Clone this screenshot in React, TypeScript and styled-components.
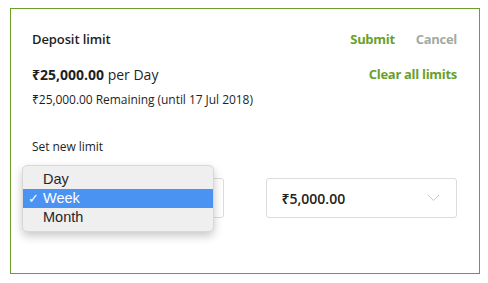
import React from 'react'
import styled, { createGlobalStyle } from 'styled-components'

const GlobalStyle = createGlobalStyle`
  body {
    margin: 0;
    background: #fff;
    font-family: "Open Sans", "Noto Sans", sans-serif;
    color: #1f1f1f;
  }
`

const green = '#6a9f2b'

const Card = styled.div`
  box-sizing: border-box;
  margin: 8px 0 0 10px;
  width: 470px;
  height: 266px;
  border: 1px solid ${green};
  padding: 20px 22px 0 21px;
`

const Row = styled.div<{ $top?: number }>`
  display: flex;
  align-items: center;
  justify-content: space-between;
  height: 20px;
  margin-top: ${p => p.$top ?? 0}px;
`

const Title = styled.div`
  font-size: 13px;
  font-weight: 600;
  letter-spacing: -0.1px;
`

const Actions = styled.div`
  display: flex;
  gap: 21px;
`

const LinkButton = styled.button<{ $muted?: boolean }>`
  border: 0;
  background: none;
  padding: 0;
  font-family: inherit;
  font-size: 13px;
  font-weight: 700;
  letter-spacing: -0.3px;
  color: ${p => (p.$muted ? '#a3aaa3' : green)};
  cursor: pointer;
`

const Amount = styled.div`
  font-size: 14px;
  b {
    font-weight: 700;
  }
`

const Small = styled.div<{ $top: number }>`
  font-size: 12px;
  line-height: 16px;
  letter-spacing: -0.05px;
  margin-top: ${p => p.$top}px;
`

const Selects = styled.div`
  display: flex;
  gap: 42px;
  margin-top: 23px;
`

const SelectWrap = styled.div`
  position: relative;
  width: 192px;
`

const SelectBox = styled.div`
  box-sizing: border-box;
  height: 40px;
  border: 1px solid #dcdcdc;
  border-radius: 3px;
  display: flex;
  align-items: center;
  justify-content: space-between;
  padding: 0 16px 0 15px;
  font-size: 14px;
  font-weight: 600;
  color: #222;
`

const Menu = styled.ul`
  position: absolute;
  left: -10px;
  top: -13px;
  width: 192px;
  margin: 0;
  padding: 4px 0;
  list-style: none;
  background: #efefef;
  border: 1px solid #d8d8d8;
  border-radius: 5px;
  box-sizing: border-box;
  box-shadow: 0 4px 10px rgba(0, 0, 0, 0.22);
  font-family: "Liberation Sans", Arial, sans-serif;
  font-size: 14.5px;
`

const Option = styled.li<{ $active?: boolean }>`
  position: relative;
  height: 19px;
  line-height: 19px;
  padding-left: 20px;
  color: ${p => (p.$active ? '#fff' : '#262626')};
  background: ${p => (p.$active ? '#4a93f2' : 'transparent')};
`

const Check = styled.span`
  position: absolute;
  left: 5px;
  font-size: 13px;
`

const Chevron = () => (
  <svg width="13" height="8" viewBox="0 0 13 8">
    <path d="M1 1l5.5 5.5L12 1" fill="none" stroke="#c8c8c8" strokeWidth="1" />
  </svg>
)

export default function App() {
  return (
    <>
      <GlobalStyle />
      <Card>
        <Row>
          <Title>Deposit limit</Title>
          <Actions>
            <LinkButton>Submit</LinkButton>
            <LinkButton $muted>Cancel</LinkButton>
          </Actions>
        </Row>
        <Row $top={15}>
          <Amount>
            <b>₹25,000.00</b> per Day
          </Amount>
          <LinkButton>Clear all limits</LinkButton>
        </Row>
        <Small $top={8}>₹25,000.00 Remaining (until 17 Jul 2018)</Small>
        <Small $top={31}>Set new limit</Small>
        <Selects>
          <SelectWrap>
            {/* the open menu covers the period select entirely */}
            <SelectBox />
            <Menu>
              <Option>Day</Option>
              <Option $active>
                <Check>✓</Check>Week
              </Option>
              <Option>Month</Option>
            </Menu>
          </SelectWrap>
          <SelectWrap>
            <SelectBox>
              ₹5,000.00
              <Chevron />
            </SelectBox>
          </SelectWrap>
        </Selects>
      </Card>
    </>
  )
}
